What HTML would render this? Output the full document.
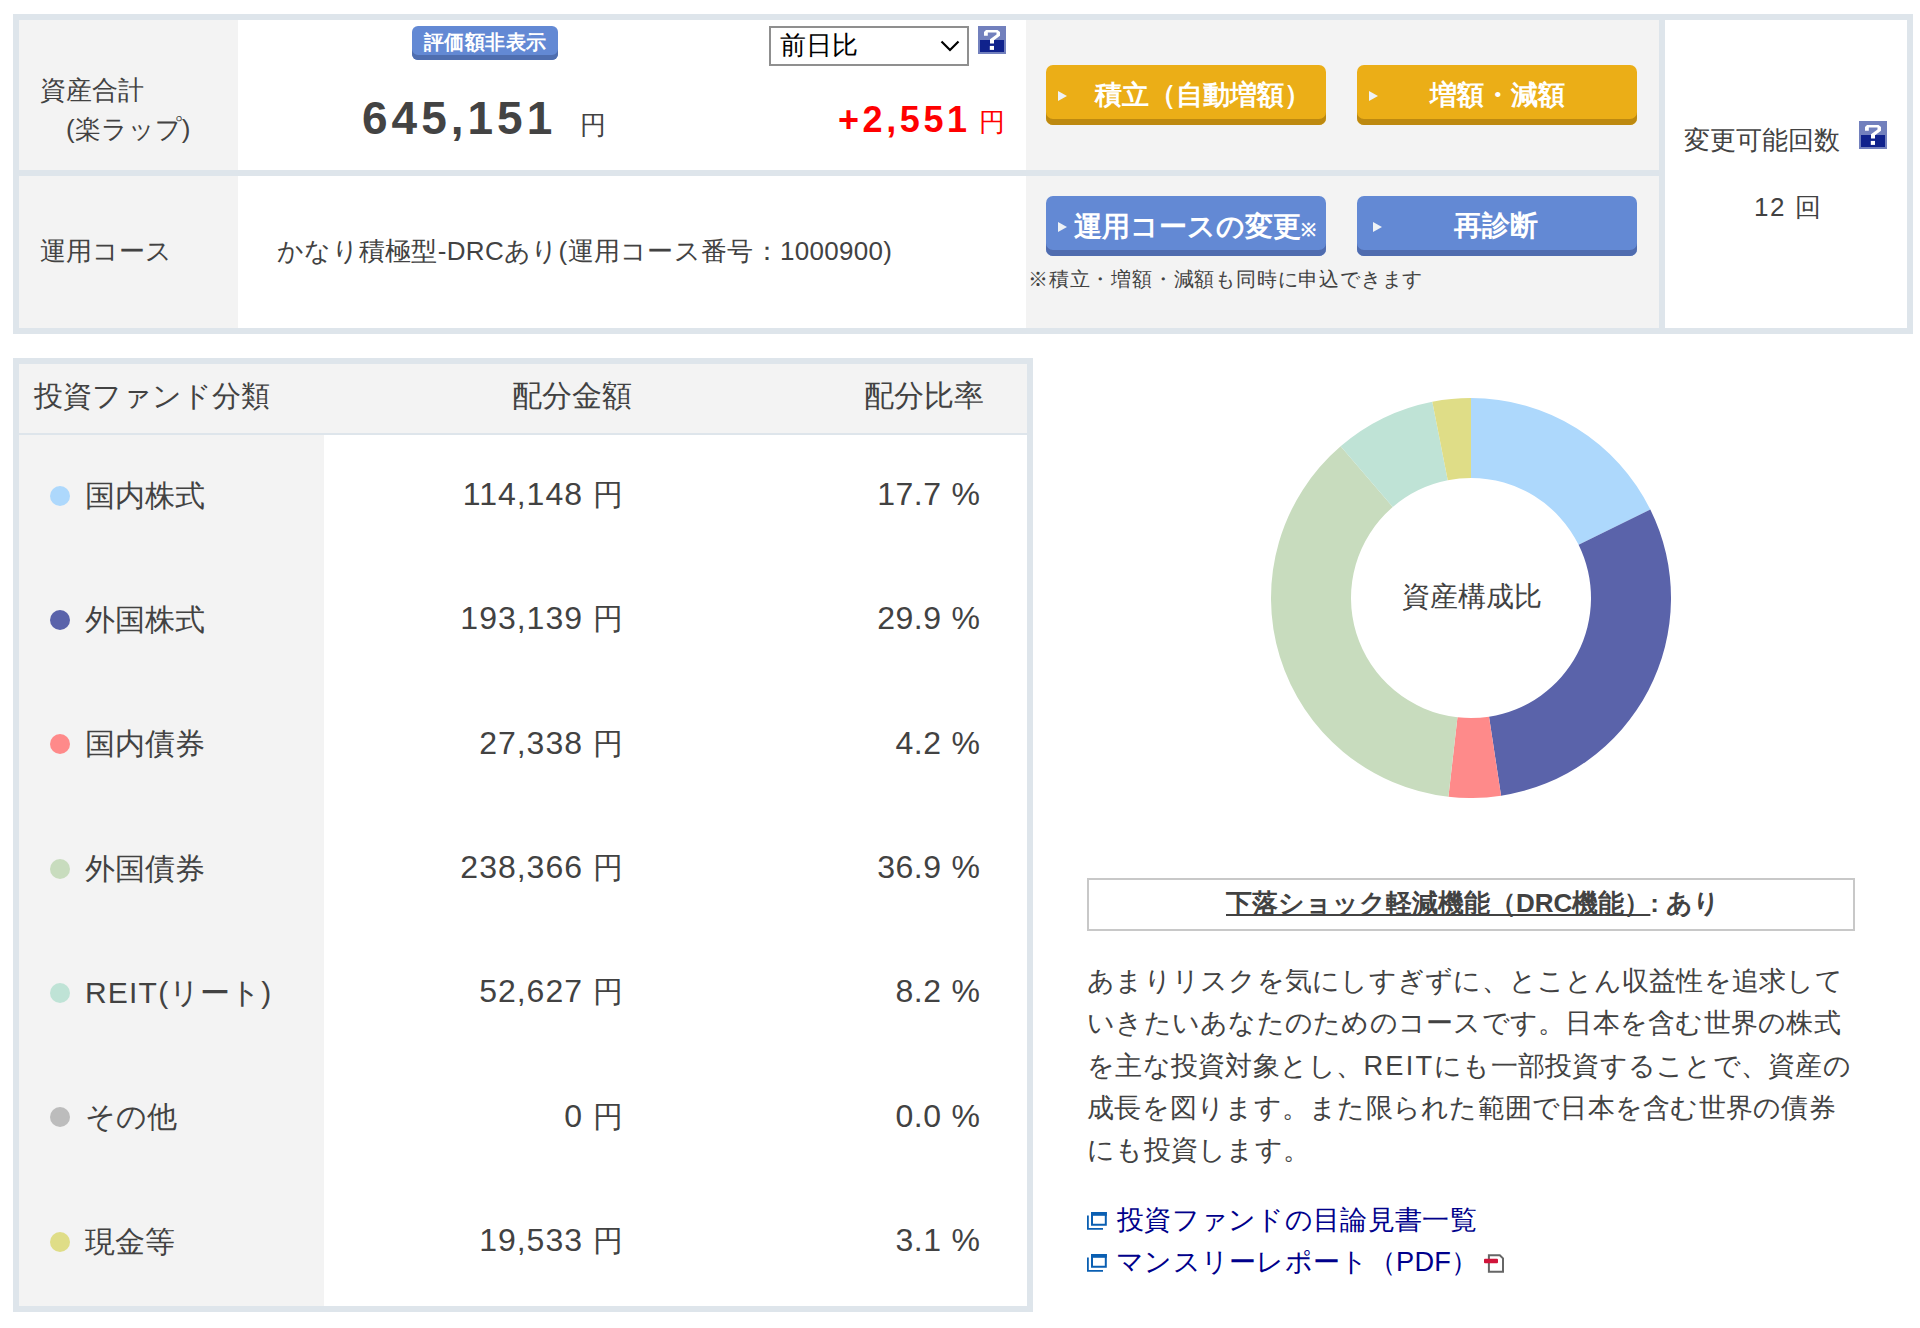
<!DOCTYPE html>
<html><head><meta charset="utf-8">
<style>
*{margin:0;padding:0;box-sizing:border-box}
html,body{width:1920px;height:1328px;background:#fff;overflow:hidden}
body{position:relative;font-family:"Liberation Sans",sans-serif;color:#424242}
.a{position:absolute;white-space:nowrap}
.bd{background:#dee5eb}
.gr{background:#f3f3f3}
.btn{position:absolute;border-radius:7px;color:#fff;font-weight:bold;height:60px}
.btn.o{background:#ebae17;box-shadow:inset 0 -6px 0 #bd8910}
.btn.b{background:#6389d4;box-shadow:inset 0 -6px 0 #4f6caf}
.btn span.t{position:absolute;line-height:40px;top:5px}
.tri{position:absolute;width:0;height:0;border-left:9px solid #eef2f6;border-top:5.25px solid transparent;border-bottom:5.25px solid transparent}
.dot{position:absolute;width:20px;height:20px;border-radius:50%;left:50px}
.t26{font-size:26px;line-height:30px}
.t30{font-size:30px;line-height:36px}
.num{font-size:32px}
.lnk{color:#00008b;font-size:27.2px;line-height:34px;letter-spacing:0.3px}
</style></head><body>

<!-- TOP TABLE -->
<div class="a bd" style="left:13px;top:14px;width:1900px;height:320px"></div>
<div class="a gr" style="left:19px;top:20px;width:219px;height:150px"></div>
<div class="a" style="left:238px;top:20px;width:788px;height:150px;background:#fff"></div>
<div class="a gr" style="left:1026px;top:20px;width:633px;height:150px"></div>
<div class="a gr" style="left:19px;top:176px;width:219px;height:152px"></div>
<div class="a" style="left:238px;top:176px;width:788px;height:152px;background:#fff"></div>
<div class="a gr" style="left:1026px;top:176px;width:633px;height:152px"></div>
<div class="a" style="left:1665px;top:20px;width:242px;height:308px;background:#fff"></div>

<div class="a" style="left:40px;top:75px;font-size:25.5px;line-height:30px">資産合計</div>
<div class="a t26" style="left:66px;top:114px">(楽ラップ)</div>

<!-- badge -->
<div class="a" style="left:412px;top:26px;width:146px;height:34px;border-radius:6px;background:#6389d4;box-shadow:inset 0 -5px 0 #4f6eaf;color:#fff;font-weight:bold;font-size:19.5px;line-height:32px;text-align:center;letter-spacing:0.5px">評価額非表示</div>

<div class="a" style="left:362px;top:90px;font-size:46px;font-weight:bold;line-height:56px;color:#434343;letter-spacing:4px">645,151</div>
<div class="a t26" style="left:580px;top:110px">円</div>

<!-- select -->
<div class="a" style="left:769px;top:26px;width:200px;height:40px;border:2px solid #8f8f8f;background:#fff"></div>
<div class="a" style="left:780px;top:28px;font-size:26px;line-height:34px;color:#000">前日比</div>
<svg class="a" style="left:940px;top:40px" width="20" height="12" viewBox="0 0 20 12"><path d="M1.5 1.5 L10 10 L18.5 1.5" fill="none" stroke="#000" stroke-width="2.2"/></svg>
<!-- ? icon -->
<svg class="a" style="left:978px;top:26px" width="28" height="28" viewBox="0 0 28 28"><rect width="28" height="28" fill="#7280bd"/><rect x="2" y="14" width="24" height="12" fill="#10228c"/><path d="M6 9.8 L6 6 L8 3.9 L19.5 3.9 L22 6 L22 9.8 L16 14.2 L16 17.4 L12 17.4 L12 13.2 L18.5 8.6 L18.5 6.6 L9.8 6.6 L9.8 9.8 Z" fill="#fff"/><rect x="11.8" y="19.9" width="4.2" height="4" fill="#fff"/></svg>

<div class="a" style="left:838px;top:97px;font-size:36px;font-weight:bold;line-height:46px;color:#f00;letter-spacing:3.6px">+2,551</div>
<div class="a t26" style="left:979px;top:107px;color:#f00">円</div>

<!-- buttons row 1 -->
<div class="btn o" style="left:1046px;top:65px;width:280px"><span class="tri" style="left:12px;top:25.5px"></span><span class="t" style="left:48.5px;top:10px;font-size:26.5px">積立（自動増額）</span></div>
<div class="btn o" style="left:1357px;top:65px;width:280px"><span class="tri" style="left:12px;top:25.5px"></span><span class="t" style="left:73px;top:10px;font-size:26.5px">増額・減額</span></div>

<div class="a t26" style="left:40px;top:236px">運用コース</div>
<div class="a t26" style="left:277px;top:236px;letter-spacing:0.3px">かなり積極型-DRCあり(運用コース番号：1000900)</div>

<div class="btn b" style="left:1046px;top:196px;width:280px"><span class="tri" style="left:12px;top:26px"></span><span class="t" style="left:28px;top:11px;font-size:28px">運用コースの変更<span style="font-size:18px">※</span></span></div>
<div class="btn b" style="left:1357px;top:196px;width:280px"><span class="tri" style="left:16px;top:26px"></span><span class="t" style="left:97px;top:10px;font-size:28px">再診断</span></div>
<div class="a" style="left:1028px;top:266px;font-size:20px;letter-spacing:0.8px;line-height:26px">※積立・増額・減額も同時に申込できます</div>

<div class="a t26" style="left:1684px;top:125px">変更可能回数</div>
<svg class="a" style="left:1859px;top:121px" width="28" height="28" viewBox="0 0 28 28"><rect width="28" height="28" fill="#7280bd"/><rect x="2" y="14" width="24" height="12" fill="#10228c"/><path d="M6 9.8 L6 6 L8 3.9 L19.5 3.9 L22 6 L22 9.8 L16 14.2 L16 17.4 L12 17.4 L12 13.2 L18.5 8.6 L18.5 6.6 L9.8 6.6 L9.8 9.8 Z" fill="#fff"/><rect x="11.8" y="19.9" width="4.2" height="4" fill="#fff"/></svg>
<div class="a t26" style="left:1754px;top:192px;letter-spacing:1.5px">12 回</div>

<!-- BOTTOM TABLE -->
<div class="a bd" style="left:13px;top:358px;width:1020px;height:954px"></div>
<div class="a gr" style="left:19px;top:364px;width:1008px;height:69px"></div>
<div class="a" style="left:19px;top:435px;width:1008px;height:871px;background:#fff"></div>
<div class="a gr" style="left:19px;top:435px;width:305px;height:871px"></div>

<div class="a" style="left:34px;top:378px;font-size:29px;line-height:36px">投資ファンド分類</div>
<div class="a" style="left:512px;top:378px;font-size:29.5px;line-height:36px">配分金額</div>
<div class="a" style="left:864px;top:378px;font-size:29.5px;line-height:36px">配分比率</div>

<!--ROWS--><div class="dot" style="top:485.5px;background:#add8fc"></div>
<div class="a t30" style="left:85px;top:477.5px">国内株式</div>
<div class="a" style="left:323px;width:300px;text-align:right;top:474.0px;line-height:40px"><span class="num" style="letter-spacing:1px">114,148</span><span style="font-size:30px;margin-left:10px">円</span></div>
<div class="a" style="left:680px;width:300px;text-align:right;top:474.0px;line-height:40px"><span class="num" style="letter-spacing:0.5px">17.7</span><span class="num" style="margin-left:10px">%</span></div>
<div class="dot" style="top:609.8px;background:#5a63aa"></div>
<div class="a t30" style="left:85px;top:601.8px">外国株式</div>
<div class="a" style="left:323px;width:300px;text-align:right;top:598.3px;line-height:40px"><span class="num" style="letter-spacing:1px">193,139</span><span style="font-size:30px;margin-left:10px">円</span></div>
<div class="a" style="left:680px;width:300px;text-align:right;top:598.3px;line-height:40px"><span class="num" style="letter-spacing:0.5px">29.9</span><span class="num" style="margin-left:10px">%</span></div>
<div class="dot" style="top:734.2px;background:#fe8a8a"></div>
<div class="a t30" style="left:85px;top:726.2px">国内債券</div>
<div class="a" style="left:323px;width:300px;text-align:right;top:722.7px;line-height:40px"><span class="num" style="letter-spacing:1px">27,338</span><span style="font-size:30px;margin-left:10px">円</span></div>
<div class="a" style="left:680px;width:300px;text-align:right;top:722.7px;line-height:40px"><span class="num" style="letter-spacing:0.5px">4.2</span><span class="num" style="margin-left:10px">%</span></div>
<div class="dot" style="top:858.5px;background:#c8dcbe"></div>
<div class="a t30" style="left:85px;top:850.5px">外国債券</div>
<div class="a" style="left:323px;width:300px;text-align:right;top:847.0px;line-height:40px"><span class="num" style="letter-spacing:1px">238,366</span><span style="font-size:30px;margin-left:10px">円</span></div>
<div class="a" style="left:680px;width:300px;text-align:right;top:847.0px;line-height:40px"><span class="num" style="letter-spacing:0.5px">36.9</span><span class="num" style="margin-left:10px">%</span></div>
<div class="dot" style="top:982.8px;background:#bfe3d6"></div>
<div class="a t30" style="left:85px;top:974.8px"><span style="letter-spacing:1.2px">REIT(</span>リート)</div>
<div class="a" style="left:323px;width:300px;text-align:right;top:971.3px;line-height:40px"><span class="num" style="letter-spacing:1px">52,627</span><span style="font-size:30px;margin-left:10px">円</span></div>
<div class="a" style="left:680px;width:300px;text-align:right;top:971.3px;line-height:40px"><span class="num" style="letter-spacing:0.5px">8.2</span><span class="num" style="margin-left:10px">%</span></div>
<div class="dot" style="top:1107.2px;background:#bcbcbc"></div>
<div class="a t30" style="left:85px;top:1099.2px">その他</div>
<div class="a" style="left:323px;width:300px;text-align:right;top:1095.7px;line-height:40px"><span class="num" style="letter-spacing:1px">0</span><span style="font-size:30px;margin-left:10px">円</span></div>
<div class="a" style="left:680px;width:300px;text-align:right;top:1095.7px;line-height:40px"><span class="num" style="letter-spacing:0.5px">0.0</span><span class="num" style="margin-left:10px">%</span></div>
<div class="dot" style="top:1231.5px;background:#dfdd87"></div>
<div class="a t30" style="left:85px;top:1223.5px">現金等</div>
<div class="a" style="left:323px;width:300px;text-align:right;top:1220.0px;line-height:40px"><span class="num" style="letter-spacing:1px">19,533</span><span style="font-size:30px;margin-left:10px">円</span></div>
<div class="a" style="left:680px;width:300px;text-align:right;top:1220.0px;line-height:40px"><span class="num" style="letter-spacing:0.5px">3.1</span><span class="num" style="margin-left:10px">%</span></div><!--/ROWS-->

<!-- DONUT -->
<svg class="a" style="left:1271px;top:398px" width="400" height="400" viewBox="-200 -200 400 400" id="donut"><path d="M0.00 -200.00 A200 200 0 0 1 179.33 -88.55 L107.60 -53.13 A120 120 0 0 0 0.00 -120.00 Z" fill="#add8fc"/><path d="M179.33 -88.55 A200 200 0 0 1 30.05 197.73 L18.03 118.64 A120 120 0 0 0 107.60 -53.13 Z" fill="#5a63aa"/><path d="M30.05 197.73 A200 200 0 0 1 -22.57 198.72 L-13.54 119.23 A120 120 0 0 0 18.03 118.64 Z" fill="#fe8a8a"/><path d="M-22.57 198.72 A200 200 0 0 1 -130.37 -151.67 L-78.22 -91.00 A120 120 0 0 0 -13.54 119.23 Z" fill="#c8dcbe"/><path d="M-130.37 -151.67 A200 200 0 0 1 -38.71 -196.22 L-23.23 -117.73 A120 120 0 0 0 -78.22 -91.00 Z" fill="#bfe3d6"/><path d="M-38.71 -196.22 A200 200 0 0 1 -0.00 -200.00 L-0.00 -120.00 A120 120 0 0 0 -23.23 -117.73 Z" fill="#dfdd87"/></svg>
<div class="a" style="left:1402px;top:580px;font-size:27.7px;line-height:34px">資産構成比</div>

<div class="a" style="left:1087px;top:878px;width:768px;height:53px;border:2px solid #c8c8c8"></div>
<div class="a" style="left:1226px;top:886px;font-size:26px;font-weight:bold;line-height:34px"><span style="text-decoration:underline">下落ショック軽減機能（DRC機能）</span>: あり</div>

<div class="a" style="left:1087px;top:960px;font-size:27.2px;line-height:42.33px;letter-spacing:0.25px;white-space:normal;width:800px">あまりリスクを気にしすぎずに、とことん収益性を追求して<br>いきたいあなたのためのコースです。日本を含む世界の株式<br>を主な投資対象とし、<span style="letter-spacing:2.2px">REIT</span>にも一部投資することで、資産の<br>成長を図ります。また限られた範囲で日本を含む世界の債券<br>にも投資します。</div>

<svg class="a" style="left:1087px;top:1212px" width="20" height="18" viewBox="0 0 20 18"><path d="M5 1 H18.8 V12.8 H5 Z" fill="none" stroke="#0a5fb2" stroke-width="2"/><rect x="4" y="0" width="15.8" height="3.8" fill="#0a5fb2"/><path d="M0.9 3.6 V16.9 H16" fill="none" stroke="#0a5fb2" stroke-width="1.8"/></svg>
<div class="a lnk" style="left:1117px;top:1203px">投資ファンドの目論見書一覧</div>
<svg class="a" style="left:1087px;top:1254px" width="20" height="18" viewBox="0 0 20 18"><path d="M5 1 H18.8 V12.8 H5 Z" fill="none" stroke="#0a5fb2" stroke-width="2"/><rect x="4" y="0" width="15.8" height="3.8" fill="#0a5fb2"/><path d="M0.9 3.6 V16.9 H16" fill="none" stroke="#0a5fb2" stroke-width="1.8"/></svg>
<div class="a lnk" style="left:1116px;top:1245px">マンスリーレポート（PDF）</div>
<svg class="a" style="left:1483px;top:1254px" width="22" height="20" viewBox="0 0 22 20"><path d="M5.9 1.2 H16.8 L20 4.4 V17.8 H5.9 Z" fill="#fff" stroke="#666" stroke-width="2"/><rect x="1" y="4.7" width="14" height="4.5" rx="1" fill="#d0143a"/></svg>

</body></html>
